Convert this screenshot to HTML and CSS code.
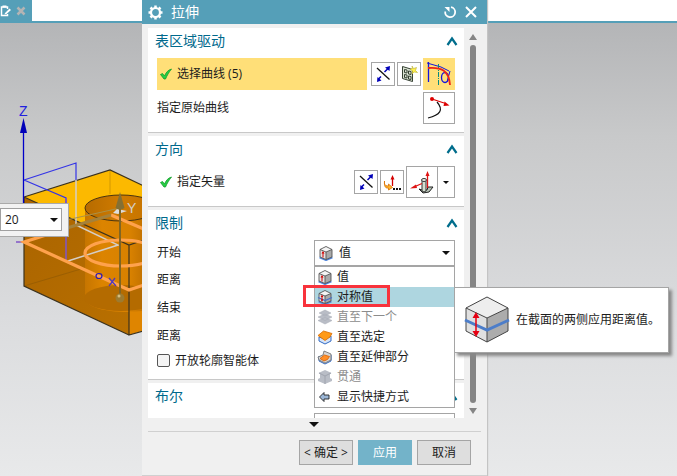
FILE: index.html
```html
<!DOCTYPE html>
<html lang="zh-CN">
<head>
<meta charset="utf-8">
<title>拉伸</title>
<link rel="stylesheet" href="styles.css">
</head>
<body>
<svg class="defs" aria-hidden="true">
  <defs>
    <symbol id="check" viewBox="0 0 14 14"><path d="M1.500 7.500l2-1 2 2.500C7 5.500 9 3 12.500 2C10 5 8 8.500 6.500 12H5Z" fill="#27cf45" stroke="#129b2b" stroke-width=".8"/></symbol>
    <symbol id="chevron" viewBox="0 0 12 10"><path d="M1.500 9L6 2.500l4.500 6.500" fill="none" stroke="#006d8c" stroke-width="2.200"/></symbol>
    <symbol id="flip" viewBox="0 0 22 22"><path d="M5 5l12.500 11.500" stroke="#111" stroke-width="1.300"/><path d="M12.500 9l4-4M9 13.500l-3 3" stroke="#0000b8" stroke-width="1.500"/><path d="M18 3l-.5 5L13 4.500zM5 19l.5-5 4 3.500z" fill="#0000b8"/></symbol>
    <symbol id="cube" viewBox="0 0 16 16"><path d="M1.500 12.500L8 15.300l6.500-2.800" fill="none" stroke="#4b82dc" stroke-width="1.500"/><path d="M2 4.500L8 7v7.500L2 12z" fill="#e3e3e3"/><path d="M8 7l6-2.500V12l-6 2.500z" fill="#a9a9a9"/><path d="M2 4.500L8 1.500l6 3L8 7z" fill="#f4f4f4"/><path d="M2 4.500L8 1.500l6 3V12l-6 2.500L2 12zL8 7l6-2.500M8 7v7.500" fill="none" stroke="#555" stroke-width=".9"/></symbol>
    <symbol id="stack" viewBox="0 0 16 16"><path d="M1 11.500l7-3 7 3-7 3.500zM1 8l7-3 7 3-7 3.500zM2 4l6-3 6 3-6 3z" fill="#b9bdc6" stroke="#a5a9b2" stroke-width=".5"/></symbol>
    <symbol id="throughcube" viewBox="0 0 16 16"><path d="M1 10l2-1V5L1.500 4 8 1l6.500 3L13 5v4l2 1v2l-7 3-7-3z" fill="#b9bdc6"/><path d="M2 4l6 3 6-3M8 7v8" fill="none" stroke="#a0a4ae"/></symbol>
  </defs>
</svg>
<div class="app">
  <header class="tabs">
    <div class="tab">
      <svg width="12" height="14" viewBox="0 0 12 14"><path d="M7.500 5V3H1.500v8.500h6V10" fill="none" stroke="#fff" stroke-width="1.500"/><path d="M2.500 1.500h4v2h-4zM5 9l4.500-4.500L11 6l-4.500 4-2 .5z" fill="#fff"/></svg>
      <svg width="10" height="10" viewBox="0 0 10 10"><path d="M1.500 1.500l7 7M8.500 1.500l-7 7" stroke="#b4b4b4" stroke-width="2.500"/></svg>
    </div>
  </header>
  <main class="viewport">
    <svg class="scene" width="142" height="453" viewBox="0 23 142 453" role="img" aria-label="模型">
      <defs>
        <linearGradient id="left" x2="1" y2="1"><stop stop-color="#aa6400"/><stop offset="1" stop-color="#b97000"/></linearGradient>
        <linearGradient id="bore"><stop stop-color="#b66b00"/><stop offset=".5" stop-color="#d07b00"/><stop offset="1" stop-color="#c27100"/></linearGradient>
        <linearGradient id="wall"><stop stop-color="#c67500"/><stop offset=".3" stop-color="#dc8400"/><stop offset=".8" stop-color="#d88100"/><stop offset="1" stop-color="#c57400"/></linearGradient>
      </defs>
      <path d="M24 197L110 170l36 17v60l-17-2z" fill="#fcb900"/>
      <path d="M24 197l105 48v90L24 286z" fill="url(#left)"/>
      <path d="M129 245l13-4v90l-13 4z" fill="#df8500"/>
      <path d="M85 208v90c0 8 17 14 44 14l13-1V208z" fill="url(#wall)"/>
      <ellipse cx="121" cy="208" rx="36" ry="13" fill="url(#bore)" stroke="#4b3510"/>
      <ellipse cx="121" cy="298" rx="37" ry="13" fill="#b46b00"/>
      <path d="M24 286l57-17" stroke="#8d5805" opacity=".6"/>
      <path d="M110 170v24" stroke="#d39800"/>
      <g fill="none" stroke="#3c321d" stroke-width="1.200"><path d="M24 197l86-27 34 16M24 197l105 48 15-5M24 197v89l105 49M129 245v90l14-4"/></g>
      <path d="M76 179v46l42 20-50 16" fill="none" stroke="#d5cec6" stroke-width="1.500"/>
      <path d="M24 180l52-17v17M24 180l42 18v8" fill="none" stroke="#3434e6" stroke-width="1.200"/>
      <path d="M66 198v63M16 242h9" stroke="#8054c8" stroke-width="1.500"/>
      <g fill="none" stroke="#ffa24c" stroke-width="3.200"><path d="M62 230l-38 12 105 48 15-5M111 215l33 14"/><ellipse cx="121" cy="253" rx="36" ry="13"/></g>
      <path d="M23.500 205v-80" stroke="#0000c8" stroke-width="1.300"/><path d="M23.500 118l3.500 15h-7z" fill="#0000b8"/>
      <text class="axis axis-z" x="19" y="116">Z</text>
      <path d="M60 230l51-15" stroke="#a58139" stroke-width="3"/><path d="M62 221l58-13" stroke="#aa9148"/>
      <path d="M113 213l4-4 10 2-9 3z" fill="#ddd"/><path d="M120 205v93" stroke="#806524" stroke-width="2"/>
      <path d="M120 192l4.500 16q-4.500 3-9 0z" fill="#847034"/><circle cx="120" cy="298" r="4.500" fill="#9c7b30"/><circle cx="119" cy="296" r="1.500" fill="#d5bc7d"/>
      <text class="axis axis-y" x="127" y="213">Y</text>
      <ellipse cx="99" cy="276" rx="3" ry="2.500" fill="none" stroke="#2a18bd" stroke-width="1.200"/><path d="M109 278l7 8M115 278l-6 8" stroke="#5139bc" stroke-width="1.300"/>
    </svg>
    <div class="value-box">
      <input class="value-input" type="text" value="20" aria-label="距离值">
      <button class="value-arrow" type="button" aria-label="展开"><span class="tri"></span></button>
    </div>
  </main>

  <section class="dialog" aria-label="拉伸">
    <div class="titlebar">
      <svg width="15" height="15" viewBox="0 0 15 15"><circle cx="7.500" cy="7.500" r="4.500" fill="none" stroke="#fff" stroke-width="2.200"/><path d="M7.500 .5v2.500M7.500 12v2.500M.5 7.500H3M12 7.500h2.500M2.500 2.500l1.500 1.500M11 11l1.500 1.500M12.500 2.500L11 4M4 11l-1.500 1.500" stroke="#fff" stroke-width="2.500"/></svg>
      <h1 class="title">拉伸</h1>
      <button class="bare" type="button" aria-label="重置"><svg width="14" height="14" viewBox="0 0 14 14"><path d="M8 2.200A5 5 0 1 1 2.200 6.500" fill="none" stroke="#fff" stroke-width="1.800"/><path d="M1.500 2h5v5z" fill="#fff"/></svg></button>
      <button class="bare" type="button" aria-label="关闭"><svg width="12" height="12" viewBox="0 0 12 12"><path d="M1 1l10 10M11 1L1 11" stroke="#fff" stroke-width="2"/></svg></button>
    </div>
    <div class="content">
      <div class="panes">
        <section class="pane">
          <div class="head"><h2>表区域驱动</h2><button class="bare" type="button" aria-label="收起表区域驱动"><svg width="12" height="10"><use href="#chevron"/></svg></button></div>
          <div class="row tall">
            <div class="pick active"><svg width="14" height="14"><use href="#check"/></svg>选择曲线 (5)</div>
            <button class="tool" type="button" aria-label="反向"><svg width="22" height="22"><use href="#flip"/></svg></button>
            <button class="tool" type="button" aria-label="绘制截面"><svg width="22" height="22" viewBox="0 0 22 22"><path d="M4.500 3.500l10 3v12l-10-3z" fill="#d9e2d2" stroke="#354032"/><path d="M6.500 6.500l2.500.5v3L6.500 9.500zM10.500 8l2.500.5v3l-2.500-.5zM6.500 11.500l2.500.5v3l-2.500-.5zM10.500 13l2.500.5v3l-2.500-.5z" fill="none" stroke="#354032"/><path d="M14 3l1.500 2.500L18.500 4.500l-1 3 2 2-3.500-.5-2 2 .5-3L12 6l2.500-.5z" fill="#fff04d" stroke="#b8af35" stroke-width=".6"/></svg></button>
            <button class="tool big active" type="button" aria-label="曲线"><svg width="32" height="32" viewBox="0 0 32 32"><path d="M5.500 4v20" stroke="#1414dc" stroke-width="1.300"/><path d="M4 5l14 4 8 4M27 13l-3 11" fill="none" stroke="#1414dc"/><ellipse cx="22" cy="19.500" rx="3.500" ry="5" fill="none" stroke="#1414dc" stroke-width="1.300"/><path d="M15.500 6v21" stroke="#078b83" stroke-dasharray="5 1 1 1"/><path d="M5 10c13-1 21 2 22 17" fill="none" stroke="#ee2414" stroke-width="1.800"/></svg></button>
          </div>
          <div class="row tall second">
            <span class="label">指定原始曲线</span>
            <button class="tool big" type="button" aria-label="指定原始曲线"><svg width="30" height="30" viewBox="0 0 30 30"><path d="M4 25c12-3 16-8 9-16" fill="none" stroke="#111" stroke-width="1.200"/><path d="M8 6l12 4" stroke="#dc0000" stroke-width="1.300"/><circle cx="8" cy="6" r="2" fill="#dc0000"/><path d="M20.500 8.500l5 4-6 .5z" fill="#dc0000"/></svg></button>
          </div>
        </section>
        <section class="pane">
          <div class="head"><h2>方向</h2><button class="bare" type="button" aria-label="收起方向"><svg width="12" height="10"><use href="#chevron"/></svg></button></div>
          <div class="row tall">
            <div class="pick"><svg width="14" height="14"><use href="#check"/></svg>指定矢量</div>
            <button class="tool" type="button" aria-label="反向"><svg width="22" height="22"><use href="#flip"/></svg></button>
            <button class="tool" type="button" aria-label="矢量对话框"><svg width="22" height="22" viewBox="0 0 22 22"><path d="M11.500 15V8" stroke="#d40000" stroke-width="1.300"/><path d="M11.500 4l2 4.500h-4z" fill="#d40000"/><path d="M3.500 10v3q1 2.500 4 2v-2l4 3.500-4 2.500v-2C4.500 17.500 3 15.500 3.500 10z" fill="#ffb52c" stroke="#d86f00" stroke-width=".8"/><path d="M12 18h2M15 18h2M18 18h2" stroke="#111" stroke-width="1.800"/></svg></button>
            <div class="split">
              <button class="split-main" type="button" aria-label="面/平面法向"><svg width="30" height="30" viewBox="0 0 30 30"><path d="M12 22l3 1h5l1-3h5l-4 5-6 1z" fill="#b8c4b7" stroke="#222"/><path d="M15 13.500V24q2 2 4 0V13.500z" fill="#d4dfd0" stroke="#333"/><ellipse cx="17" cy="13" rx="2.500" ry="1.500" fill="#eef4eb" stroke="#333"/><path d="M20.500 21V8M15 16.500l-7 3" stroke="#df1414" stroke-width="1.300"/><path d="M20.500 4l2 5h-4zM3 21.500l6-4 1 3.500z" fill="#df1414"/></svg></button>
              <button class="split-arrow" type="button" aria-label="更多矢量"><span class="tri small"></span></button>
            </div>
          </div>
        </section>
        <section class="pane">
          <div class="head"><h2>限制</h2><button class="bare" type="button" aria-label="收起限制"><svg width="12" height="10"><use href="#chevron"/></svg></button></div>
          <div class="row combo-row">
            <label class="label" for="start">开始</label>
            <div class="combo">
              <svg class="combo-icon" width="16" height="16" viewBox="0 0 16 16"><use href="#cube"/><path d="M5 7.500v5" stroke="#d00000"/><path d="M5 6l1.500 2.500h-3z" fill="#d00000"/></svg>
              <select id="start"><option>值</option></select>
              <span class="tri combo-tri"></span>
              <ul class="menu">
                <li><button class="option" type="button"><svg width="16" height="16" viewBox="0 0 16 16"><use href="#cube"/><path d="M5 7.500v5" stroke="#d00000"/><path d="M5 6l1.500 2.500h-3z" fill="#d00000"/></svg>值</button></li>
                <li class="marked"><button class="option selected" type="button"><svg width="16" height="16" viewBox="0 0 16 16"><use href="#cube"/><path d="M1 8.500l7 3 7-3" fill="none" stroke="#4b72c8" stroke-width="1.300"/><path d="M5 7v4" stroke="#d00000"/><path d="M5 5.500L6.300 8H3.700zM5 13l1.300-2.500H3.700z" fill="#d00000"/></svg>对称值</button></li>
                <li><button class="option" type="button" disabled><svg width="16" height="16"><use href="#stack"/></svg>直至下一个</button></li>
                <li><button class="option" type="button"><svg width="16" height="16" viewBox="0 0 16 16"><path d="M2 8v4l6 3 6-3V7l-6 3z" fill="#d7e4f7" stroke="#326bc5"/><path d="M1 6.500L6.500 2 15 4.500 13 8l-5 3.500z" fill="#ff9a18" stroke="#d76900" stroke-width=".8"/></svg>直至选定</button></li>
                <li><button class="option" type="button"><svg width="16" height="16" viewBox="0 0 16 16"><path d="M2 7v5l6 3 6-3V6" fill="#dce6f5" stroke="#326bc5"/><path d="M1 8l5-2 1-4 7 3v6l-6 3-6-3z" fill="#d5d5d5" stroke="#666" stroke-width=".8"/><path d="M3 9.500L7.500 6l5 1.500-2 3L7 12z" fill="#ff8e28" stroke="#d76000" stroke-width=".8"/></svg>直至延伸部分</button></li>
                <li><button class="option" type="button" disabled><svg width="16" height="16"><use href="#throughcube"/></svg>贯通</button></li>
                <li><button class="option" type="button"><svg width="16" height="16" viewBox="0 0 16 16"><path d="M2.500 8L7 3.500V6h5v4H7v2.500z" fill="#9bb6d6" stroke="#222" stroke-width=".9"/></svg>显示快捷方式</button></li>
              </ul>
            </div>
          </div>
          <div class="row">距离</div>
          <div class="row">结束</div>
          <div class="row">距离</div>
          <label class="check-row"><input class="box" type="checkbox">开放轮廓智能体</label>
        </section>
        <section class="pane">
          <div class="head"><h2>布尔</h2><button class="bare" type="button" aria-label="收起布尔"><svg width="12" height="10"><use href="#chevron"/></svg></button></div>
          <div class="row combo-row"><div class="combo"><select aria-label="布尔"><option></option></select></div></div>
        </section>
      </div>
      <div class="scrollbar" aria-hidden="true"><span class="scroll-up"></span><span class="thumb"></span><span class="scroll-down"></span></div>
    </div>
    <div class="expander"><span class="tri wide"></span></div>
    <footer class="actions">
      <button class="action" type="button">&lt; 确定 &gt;</button>
      <button class="action primary" type="button">应用</button>
      <button class="action" type="button">取消</button>
    </footer>
  </section>

  <div class="tooltip" role="tooltip">
    <svg width="46" height="48" viewBox="0 0 46 48"><path d="M2 12l21 10v24L2 35z" fill="#e0e0e0"/><path d="M23 22l21-10v23L23 46z" fill="#acacac"/><path d="M2 12L23 1l21 11-21 10z" fill="#eee"/><path d="M2 12L23 1l21 11v23L23 46 2 35zL23 22l21-10M23 22v24" fill="none" stroke="#444"/><path d="M1 24l22 10 22-10" fill="none" stroke="#4c7dc9" stroke-width="3"/><path d="M12 20v16" stroke="#e60012" stroke-width="1.500"/><path d="M12 16l3.500 6h-7zM12 41l3.500-6h-7z" fill="#e60012"/></svg>
    在截面的两侧应用距离值。
  </div>
</div>
</body>
</html>
```

FILE: styles.css
```css
*, *::after { box-sizing: border-box; }

body {
  margin: 0;
  font: 12px/18px "Open Sans", "Noto Sans CJK SC", sans-serif;
  color: #1c1c1c;
}

button, input, select { font: inherit; color: inherit; margin: 0; border-radius: 0; }
button { padding: 0; }
svg { display: block; flex: none; }
h1, h2 { margin: 0; font-size: 14px; font-weight: 400; line-height: 20px; }
.defs { position: absolute; width: 0; height: 0; }

.app {
  position: relative;
  display: flex;
  flex-direction: column;
  min-height: 100vh;
  overflow: hidden;
}

.tabs { height: 23px; background: #fff; border-bottom: 2px solid #559fb8; }
.tab {
  display: flex;
  align-items: center;
  gap: 4px;
  width: 32px;
  height: 21px;
  background: #559fb8;
}

.viewport {
  position: relative;
  flex: 1;
  background: linear-gradient(#b4b5b7, #c8c9ca 25%, #dbdcde 65%, #e8e9ea);
}
.axis { font: 14px "Liberation Sans", sans-serif; }
.axis-z { fill: #2020df; }
.axis-y { fill: #d4d0c9; }

.value-box {
  position: absolute;
  top: 180px;
  left: 0;
  display: flex;
  padding: 4px 6px 5px 0;
  background: #f2f2f2;
  border: 1px solid #aaa;
  border-left: 0;
}
.value-input {
  width: 46px;
  height: 23px;
  padding: 0 4px;
  background: #fff;
  border: 1px solid #a0a0a0;
  border-right: 0;
}
.value-arrow {
  display: grid;
  place-items: center;
  width: 16px;
  background: #fff;
  border: 1px solid #a0a0a0;
  border-left: 0;
}

.tri {
  border: solid transparent;
  border-width: 4px 4px 0;
  border-top-color: #111;
}
.tri.small { border-width: 3px 3px 0; }
.tri.wide { border-width: 5px 5px 0; }

.dialog {
  position: absolute;
  top: 0;
  bottom: 0;
  left: 142px;
  display: flex;
  flex-direction: column;
  width: 345px;
  background: #f0f0f0;
  border-bottom: 1px solid #d0d0d0;
  box-shadow: 1px 0 1px #c4c4c4;
}
.titlebar {
  display: flex;
  align-items: center;
  gap: 8px;
  height: 24px;
  padding: 0 10px 0 6px;
  background: #559fb8;
  color: #fff;
}
.title { flex: 1; }
.bare { background: none; border: 0; }

.content { display: flex; height: 394px; padding: 4px 0 0 6px; }
.panes { flex: 1; overflow: hidden; }
.pane {
  margin-bottom: 3px;
  padding: 0 9px 8px;
  background: #fff;
  border-bottom: 1px solid #c8c8c8;
}
.head {
  display: flex;
  align-items: center;
  justify-content: space-between;
  height: 26px;
  margin: 0 -4px 4px -2px;
  padding-right: 1px;
  color: #00698c;
}

.row { display: flex; align-items: center; gap: 2px; height: 28px; }
.row.tall { height: 32px; }
.row.second { margin-top: 2px; }
.row.combo-row { height: 26px; }
.label { flex: 1; }
.pick {
  display: flex;
  flex: 1;
  align-items: center;
  gap: 4px;
  height: 32px;
  margin-right: 2px;
  padding-left: 2px;
}
.active { background: #ffdf78; }

.tool, .split {
  display: grid;
  place-items: center;
  width: 24px;
  height: 24px;
  background: #fff;
  border: 1px solid #a5a5a5;
}
.tool.big { width: 32px; height: 32px; }
.tool.active { background: #ffdf78; border: 0; }
.split { display: flex; width: 49px; height: 32px; }
.split-main, .split-arrow {
  display: grid;
  place-items: center;
  height: 30px;
  background: none;
  border: 0;
}
.split-main { width: 31px; border-right: 1px solid #a5a5a5; }
.split-arrow { flex: 1; }

.combo { position: relative; width: 141px; margin-left: auto; }
.combo select {
  display: block;
  width: 100%;
  height: 26px;
  padding: 0 20px 0 24px;
  background: #fff;
  border: 1px solid #a5a5a5;
  appearance: none;
}
.combo-icon { position: absolute; top: 5px; left: 4px; }
.combo-tri { position: absolute; top: 11px; right: 5px; }

.menu {
  position: absolute;
  top: 100%;
  left: 0;
  z-index: 1;
  width: 100%;
  margin: 0;
  padding: 0;
  list-style: none;
  background: #fff;
  border: 1px solid #a5a5a5;
}
.option {
  display: flex;
  align-items: center;
  gap: 4px;
  width: 100%;
  height: 20px;
  padding: 0 2px;
  background: none;
  border: 0;
}
.option:disabled { color: #8c8c8c; }
.option.selected { background: #aed6e0; }
.marked { position: relative; }
.marked::after {
  content: "";
  position: absolute;
  top: -2px;
  left: -12px;
  width: 87px;
  height: 22px;
  border: 3px solid #f8333c;
}

.check-row { display: flex; align-items: center; gap: 5px; height: 21px; }
.box {
  width: 13px;
  height: 13px;
  background: #f4f4f4;
  border: 1px solid #555;
  border-radius: 2px;
  appearance: none;
}

.scrollbar {
  display: flex;
  flex-direction: column;
  align-items: center;
  gap: 5px;
  width: 23px;
  padding: 6px 5px 4px 0;
}
.scroll-up, .scroll-down { border: solid transparent; }
.scroll-up { border-width: 0 4px 6px; border-bottom-color: #858585; }
.scroll-down { border-width: 6px 4px 0; border-top-color: #858585; }
.thumb { flex: 1; width: 6px; background: #858585; border-radius: 3px; }

.expander {
  display: grid;
  place-items: center;
  height: 14px;
  margin: 0 6px;
  padding-right: 1px;
  border-bottom: 1px solid #d0d0d0;
}
.actions {
  display: flex;
  justify-content: flex-end;
  gap: 5px;
  padding: 8px 16px 0 0;
}
.action {
  width: 54px;
  height: 25px;
  background: #dedede;
  border: 1px solid #a5a5a5;
}
.action.primary { background: #73b3c9; border-color: #73b3c9; color: #fff; }

.tooltip {
  position: absolute;
  top: 287px;
  left: 454px;
  display: flex;
  align-items: center;
  gap: 6px;
  width: 215px;
  height: 66px;
  padding-left: 9px;
  background: #fff;
  border: 1px solid #a5a5a5;
  box-shadow: 3px 3px 3px #888;
  white-space: nowrap;
}
```
